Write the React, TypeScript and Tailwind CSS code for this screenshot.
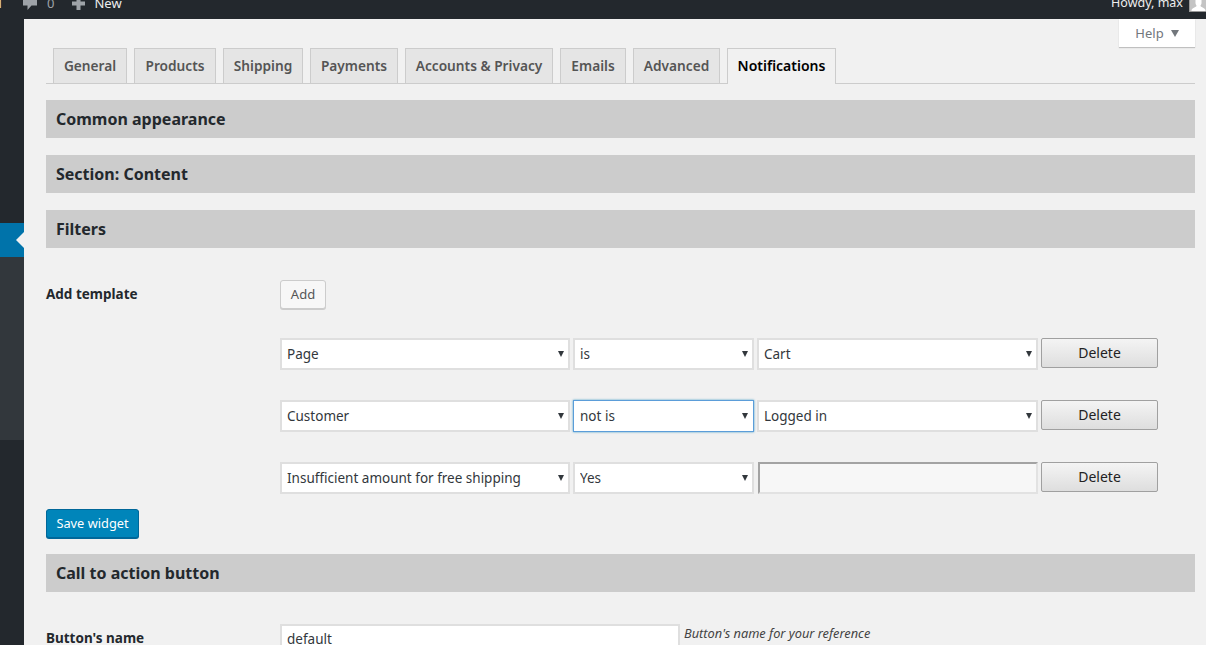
const FONT = "font-['Noto_Sans',sans-serif]"

const tabs = [
  { label: 'General', w: 'w-[74px]' },
  { label: 'Products', w: 'w-[82px]' },
  { label: 'Shipping', w: 'w-[80px]' },
  { label: 'Payments', w: 'w-[88px]' },
  { label: 'Accounts & Privacy', w: 'w-[148px]' },
  { label: 'Emails', w: 'w-[66px]' },
  { label: 'Advanced', w: 'w-[87px]' }
]

function SectionBar({ title, className = '' }: { title: string; className?: string }) {
  return (
    <div className={`h-[38px] bg-[#cccccc] pl-[10px] flex items-center text-[16px] font-bold text-[#23282d] ${className}`}>
      {title}
    </div>
  )
}

function Select({ value, w, focused }: { value: string; w: string; focused?: boolean }) {
  return (
    <div className={`relative h-[32px] ${w}`}>
      <select
        defaultValue={value}
        className={`w-full h-full appearance-none bg-white pl-[5px] text-[13.500px] text-[#32373c] border-2 outline-none ${FONT} ${
          focused ? 'border-[#5b9dd9] border-[1px] pl-[6px] shadow-[0_0_2px_rgba(30,140,190,0.8)]' : 'border-[#dfdfdf]'
        }`}
      >
        <option>{value}</option>
      </select>
      <span className="absolute right-[6px] top-[13px] w-0 h-0 border-l-[3.500px] border-r-[3.500px] border-t-[6px] border-l-transparent border-r-transparent border-t-[#32373c]" />
    </div>
  )
}

function DeleteButton() {
  return (
    <button className="w-[117px] h-[30px] pb-[2px] rounded-[2px] border border-[#a0a0a0] bg-gradient-to-b from-[#f4f4f4] to-[#dedede] text-[14px] text-[#222222]">
      Delete
    </button>
  )
}

function FilterRow({ children }: { children: React.ReactNode }) {
  return <div className="flex gap-[3px] items-start">{children}</div>
}

export default function App() {
  return (
    <div className={`w-[1206px] h-[645px] overflow-hidden flex flex-col bg-[#f1f1f1] ${FONT}`}>
      <header className="h-[19px] shrink-0 overflow-hidden bg-[#23282d]">
        <div className="h-[32px] -mt-[13px] flex items-center text-[13px] text-[#eeeeee] leading-[32px]">
          <span className="w-[23px] -ml-[4px] pl-0 shrink-0">1</span>
          <svg width="15" height="15" viewBox="0 0 15 15" className="ml-[4px] shrink-0 fill-[#9ea3a8]">
            <path d="M0 0h14v9.500H8.500L4.500 14v-4.500H0z" />
          </svg>
          <span className="ml-[9px] text-[#9ea3a8]">0</span>
          <svg width="15" height="15" viewBox="0 0 15 15" className="ml-[17px] shrink-0 fill-[#9ea3a8]">
            <path d="M5.500 1h4v4.500H14v4H9.500V14h-4V9.500H1v-4h4.500z" />
          </svg>
          <span className="ml-[8px]">New</span>
          <span className="ml-auto text-[12.500px]">Howdy, max</span>
          <span className="ml-[6px] w-[17px] h-[12px] self-start mt-[13px] bg-[#c4c4c4] border-b border-l border-[#999999] overflow-hidden shrink-0">
            <svg width="17" height="12" viewBox="0 0 17 12" className="fill-white block">
              <path d="M5.500 0h6v3c0 1.500-1 2-1 3 0 1 4 1.500 5 4v2H1.500v-2c1-2.500 5-3 5-4 0-1-1-1.500-1-3z" />
            </svg>
          </span>
        </div>
      </header>

      <div className="flex flex-1 min-h-0">
        <aside className="w-[24px] shrink-0 bg-[#23282d] flex flex-col">
          <div className="h-[204px] shrink-0" />
          <div className="h-[34px] shrink-0 bg-[#0073aa] flex items-center justify-end">
            <span className="w-0 h-0 border-y-[8px] border-y-transparent border-r-[8px] border-r-[#f1f1f1]" />
          </div>
          <div className="h-[183px] shrink-0 bg-[#32373c]" />
        </aside>

        <main className="flex-1 min-w-0 pl-[22px] pr-[11px]">
          <div className="flex justify-end h-[29px]">
            <button className="w-[76px] h-[28px] pt-[1px] bg-white shadow-[0_1px_1px_rgba(0,0,0,0.2)] text-[13px] text-[#72777c] flex items-center justify-center gap-[7px]">
              Help
              <span className="w-0 h-0 border-x-[4.500px] border-x-transparent border-t-[7px] border-t-[#72777c]" />
            </button>
          </div>

          <nav className="h-[36px] border-b border-[#cccccc] pl-[7px] flex gap-[7px]">
            {tabs.map(t => (
              <div
                key={t.label}
                className={`${t.w} h-[35px] border border-b-0 border-[#cccccc] bg-[#e5e5e5] flex items-center justify-center text-[13.700px] font-semibold text-[#555555] whitespace-nowrap`}
              >
                {t.label}
              </div>
            ))}
            <div className="w-[109px] h-[36px] pb-[3px] border border-b-0 border-[#cccccc] bg-[#f1f1f1] flex items-center justify-center text-[14px] font-semibold text-black">
              Notifications
            </div>
          </nav>

          <SectionBar title="Common appearance" className="mt-[16px]" />
          <SectionBar title="Section: Content" className="mt-[17px]" />
          <SectionBar title="Filters" className="mt-[17px]" />

          <div className="mt-[32px] flex">
            <div className="w-[234px] shrink-0 text-[13.500px] font-bold text-[#23282d] pt-[4px]">Add template</div>
            <div className="flex-1">
              <button className="w-[46px] h-[29px] rounded-[3px] border border-[#cccccc] bg-[#f7f7f7] shadow-[0_1px_0_#cccccc] text-[13px] text-[#555555]">
                Add
              </button>
              <div className="mt-[29px] flex flex-col gap-[30px]">
                <FilterRow>
                  <Select value="Page" w="w-[290px]" />
                  <Select value="is" w="w-[181px]" />
                  <Select value="Cart" w="w-[281px]" />
                  <DeleteButton />
                </FilterRow>
                <FilterRow>
                  <Select value="Customer" w="w-[290px]" />
                  <Select value="not is" w="w-[181px]" focused />
                  <Select value="Logged in" w="w-[281px]" />
                  <DeleteButton />
                </FilterRow>
                <FilterRow>
                  <Select value="Insufficient amount for free shipping" w="w-[290px]" />
                  <Select value="Yes" w="w-[181px]" />
                  <input className="ml-[1px] w-[280px] h-[32px] bg-[#f7f7f7] border-2 border-t-[#a3a3a3] border-l-[#a3a3a3] border-r-[#e2e2e2] border-b-[#e2e2e2] outline-none" />
                  <DeleteButton />
                </FilterRow>
              </div>
            </div>
          </div>

          <button className="block mt-[15px] w-[93px] h-[29px] rounded-[3px] bg-[#0085ba] border border-[#006799] shadow-[0_1px_0_#006799] text-[12.800px] text-white">
            Save widget
          </button>

          <SectionBar title="Call to action button" className="mt-[16px]" />

          <div className="mt-[32px] flex items-start">
            <div className="w-[234px] shrink-0 text-[13.500px] font-bold text-[#23282d] pt-[4px]">Button's name</div>
            <input
              defaultValue="default"
              className="w-[400px] h-[32px] bg-white border-2 border-[#dfdfdf] pl-[5px] pb-[3px] text-[13.500px] text-[#32373c] outline-none"
            />
            <span className="ml-[4px] text-[12.800px] italic text-[#444444]">Button's name for your reference</span>
          </div>
        </main>
      </div>
    </div>
  )
}
